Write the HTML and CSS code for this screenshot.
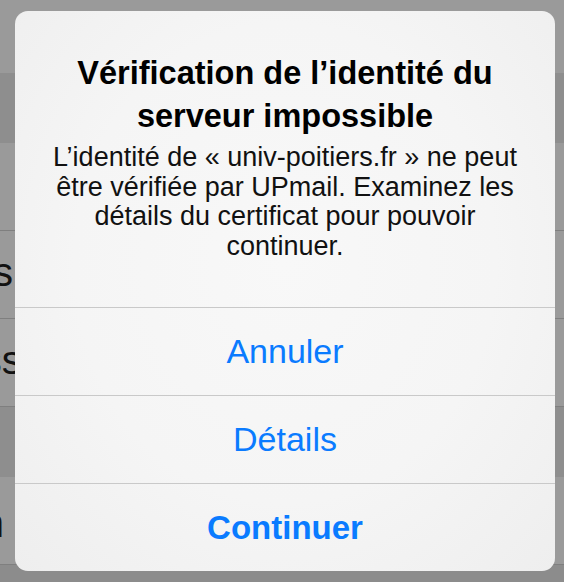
FILE: index.html
```html
<!DOCTYPE html>
<html lang="fr">
<head>
    <meta charset="UTF-8">
    <title>Vérification du serveur</title>
    <link rel="stylesheet" href="styles.css">
</head>
<body>
    <div class="screen">
        <div class="nav-bar"></div>
        <div class="group-gap"></div>
        <div class="cell"></div>
        <div class="cell"><div class="cell-label"><span>Utilisateurs</span></div></div>
        <div class="cell"><div class="cell-label wide"><span>Mot de passe</span></div></div>
        <div class="group-gap"></div>
        <div class="cell"><div class="cell-label last"><span>Connexion</span></div></div>
        <div class="footer"></div>

        <!-- alerte iOS par-dessus la liste -->
        <div class="alert">
            <div class="alert-content">
                <h1>Vérification de l’identité du<br>serveur impossible</h1>
                <p>L’identité de «&nbsp;univ-poitiers.fr&nbsp;» ne peut<br>être vérifiée par UPmail. Examinez les<br>détails du certificat pour pouvoir<br>continuer.</p>
            </div>
            <div class="alert-buttons">
                <button type="button">Annuler</button>
                <button type="button">Détails</button>
                <button type="button" class="primary">Continuer</button>
            </div>
        </div>
    </div>
</body>
</html>
```

FILE: styles.css
```css
body {
    margin: 0;
    padding: 0;
    font-family: 'Liberation Sans', Arial, sans-serif;
    background-color: #8c8c8c;
}

.screen {
    position: relative;
    width: 564px;
    height: 582px;
    overflow: hidden;
    display: flex;
    flex-direction: column;
    background-color: #8c8c8c;
}

.nav-bar {
    height: 73px;
    background-color: #9a9a9a;
}

.group-gap {
    height: 70px;
    background-color: #8e8e8e;
}

.cell {
    height: 87px;
    border-bottom: 1px solid #7f7f7f;
    background-color: #9a9a9a;
    display: flex;
    align-items: center;
}

.cell-label {
    width: 13px;
    display: flex;
    justify-content: flex-end;
    overflow: hidden;
    white-space: nowrap;
    font-size: 40px;
    color: #121212;
    margin-top: -4px;
}
.cell-label.wide {
    width: 44px; /* le texte continue sous l'alerte */
}
.cell-label.last {
    width: 4px;
    margin-top: 6px;
}

.footer {
    flex: 1;
    background-color: #8c8c8c;
}

/* la fenêtre d'alerte */
.alert {
    position: absolute;
    left: 15px;
    top: 11px;
    width: 540px;
    height: 560px;
    border-radius: 13px;
    overflow: hidden;
    background: radial-gradient(ellipse at 50% 45%, #f8f8f8 0%, #f5f5f5 55%, #eeeeee 100%);
    display: flex;
    flex-direction: column;
}

.alert-content {
    padding: 41px 20px 46px;
    text-align: center;
    color: #000;
}

.alert-content h1 {
    margin: 0;
    font-size: 32.5px;
    line-height: 43px;
    font-weight: 700;
}

.alert-content p {
    margin: 5px 0 0;
    font-size: 27px;
    line-height: 29.5px;
    color: #111;
}

.alert-buttons {
    flex: 1;
    display: flex;
    flex-direction: column;
}

.alert-buttons button {
    height: 88px;
    border: none;
    border-top: 1px solid #c9c9c9;
    background: transparent;
    font-family: 'Liberation Sans', Arial, sans-serif;
    font-size: 34px;
    color: #0a7bff;
    padding: 0;
    cursor: pointer;
}
.alert-buttons button.primary {
    font-weight: 700;
    font-size: 33px;
}
```
